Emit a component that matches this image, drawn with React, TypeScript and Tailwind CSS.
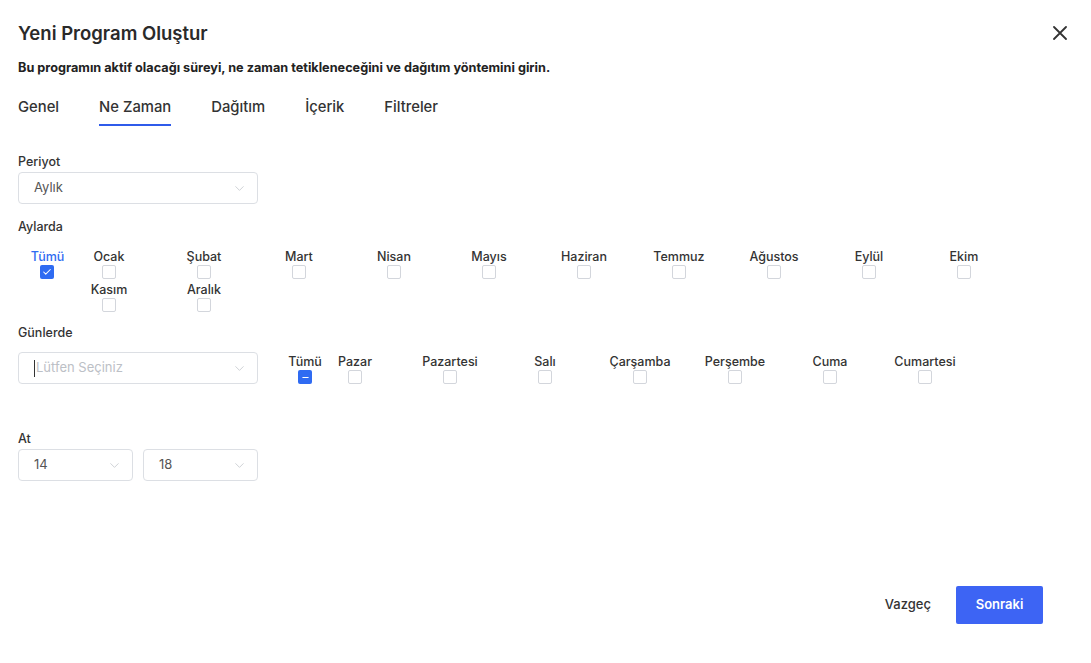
import { ChevronDown, Check, Minus } from "lucide-react";

const months = ["Ocak", "Şubat", "Mart", "Nisan", "Mayıs", "Haziran", "Temmuz", "Ağustos", "Eylül", "Ekim", "Kasım", "Aralık"];
const days = ["Pazar", "Pazartesi", "Salı", "Çarşamba", "Perşembe", "Cuma", "Cumartesi"];
const tabs = ["Genel", "Ne Zaman", "Dağıtım", "İçerik", "Filtreler"];

const Box = ({ state }: { state?: "checked" | "half" }) => {
  if (state === "checked")
    return (
      <span className="flex h-[14px] w-[14px] items-center justify-center rounded-[2px] bg-[#2f6bf2]">
        <Check className="h-[10px] w-[10px] text-white" strokeWidth={2.5} />
      </span>
    );
  if (state === "half")
    return (
      <span className="flex h-[14px] w-[14px] items-center justify-center rounded-[2px] bg-[#2f6bf2]">
        <Minus className="h-[9px] w-[9px] text-white" strokeWidth={3} />
      </span>
    );
  return <span className="block h-[14px] w-[14px] rounded-[2px] border border-[#d3d6dc] bg-white" />;
};

const Item = ({ label, w }: { label: string; w: string }) => (
  <div className={`flex flex-col items-center ${w}`}>
    <span className="text-[12.5px] leading-[16px] font-medium text-[#333]">{label}</span>
    <Box />
  </div>
);

const Select = ({ value, placeholder, w }: { value?: string; placeholder?: string; w: string }) => (
  <div className={`flex h-[32px] items-center justify-between rounded-[4px] border border-[#dcdfe4] pl-[15px] pr-[10px] ${w}`}>
    {value ? (
      <span className="text-[13px] text-[#555]">{value}</span>
    ) : (
      <span className="flex items-center text-[13px] text-[#bcc0c6]">
        <span className="mr-px h-[17px] w-px bg-[#333]" />
        {placeholder}
      </span>
    )}
    <ChevronDown className="h-[15px] w-[15px] text-[#c4c7cc]" strokeWidth={1.3} />
  </div>
);

export default function App() {
  return (
    <div className="h-[663px] w-[1091px] bg-white px-[18px] text-[#2b2b2b]" style={{ fontFamily: "Inter, 'Noto Sans', sans-serif" }}>
      <div className="flex items-center justify-between pt-[21px]">
        <h1 className="text-[18.5px] leading-[24px] font-semibold text-[#2a2a2a]">Yeni Program Oluştur</h1>
        <svg width="14" height="14" viewBox="0 0 14 14" className="mr-[6px] text-[#333]">
          <path d="M1 1 L13 13 M13 1 L1 13" stroke="currentColor" strokeWidth="1.8" strokeLinecap="round" />
        </svg>
      </div>
      <p className="mt-[14px] text-[12.7px] leading-[18px] font-bold text-[#222]">
        Bu programın aktif olacağı süreyi, ne zaman tetikleneceğini ve dağıtım yöntemini girin.
      </p>

      <div className="mt-[20px] flex gap-[40px]">
        {tabs.map((t, i) => (
          <div key={t} className="flex flex-col">
            <span className="text-[14.8px] leading-[20px] font-medium text-[#333]">{t}</span>
            <span className={`mt-[7px] h-[2px] ${i === 1 ? "bg-[#2f5bea]" : "bg-transparent"}`} />
          </div>
        ))}
      </div>

      <div className="mt-[27px] text-[12.5px] leading-[17px] font-medium text-[#333]">Periyot</div>
      <div className="mt-[2px]">
        <Select value="Aylık" w="w-[240px]" />
      </div>

      <div className="mt-[14px] text-[12.5px] leading-[17px] font-medium text-[#333]">Aylarda</div>
      <div className="mt-[14px] flex items-start">
        <div className="flex w-[59px] flex-col items-center">
          <span className="text-[12.5px] leading-[16px] font-medium text-[#2f6bf2]">Tümü</span>
          <Box state="checked" />
        </div>
        <div className="-ml-[15.5px] flex w-[1012px] flex-wrap gap-y-[3px]">
          {months.map((m) => (
            <Item key={m} label={m} w="w-[95px]" />
          ))}
        </div>
      </div>

      <div className="mt-[12px] text-[12.5px] leading-[17px] font-medium text-[#333]">Günlerde</div>
      <div className="mt-[11px] flex items-start">
        <Select placeholder="Lütfen Seçiniz" w="w-[240px]" />
        <div className="mt-[2px] ml-[17.5px] flex w-[59px] flex-col items-center">
          <span className="text-[12.5px] leading-[16px] font-medium text-[#333]">Tümü</span>
          <Box state="half" />
        </div>
        <div className="mt-[2px] -ml-[27px] flex">
          {days.map((d) => (
            <Item key={d} label={d} w="w-[95px]" />
          ))}
        </div>
      </div>

      <div className="mt-[46px] text-[12.5px] leading-[17px] font-medium text-[#333]">At</div>
      <div className="mt-[2px] flex gap-[10px]">
        <Select value="14" w="w-[115px]" />
        <Select value="18" w="w-[115px]" />
      </div>

      <div className="mt-[105px] flex items-center justify-end gap-[25px] pr-[30px]">
        <span className="text-[13px] font-medium text-[#333]">Vazgeç</span>
        <button className="h-[38px] w-[87px] rounded-[2px] bg-[#3d64f4] text-[13px] font-semibold text-white">Sonraki</button>
      </div>
    </div>
  );
}
